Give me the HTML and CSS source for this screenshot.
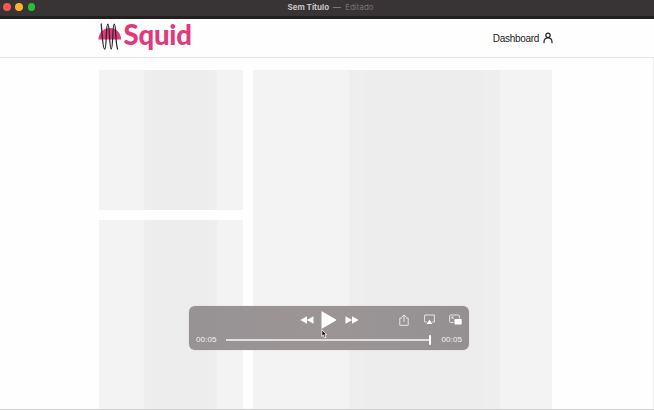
FILE: index.html
```html
<!DOCTYPE html>
<html lang="pt">
<head>
<meta charset="utf-8">
<title>Sem Título</title>
<link rel="stylesheet" href="styles.css">
</head>
<body>
<div class="window">
  <header class="titlebar">
    <div class="lights"><i class="light close"></i><i class="light minimize"></i><i class="light expand"></i></div>
    <div class="title"><b>Sem Título</b><span class="dash">—</span><span>Editado</span></div>
  </header>
  <nav class="nav">
    <div class="brand">
      <svg class="mark" viewBox="0 0 24 28" width="24" height="28">
        <path d="M.3 16.500C1.300 9 5.500 5 11.800 5s10.500 4 11.500 11.500z" fill="#e13a7c"/>
        <path d="M3.200 1C4 7 4.500 26 6.700 26S7.700 1 9.800 1s1.400 25 3.400 25S14.300 1 16.300 1s.9 20 3.300 25" fill="none" stroke="#292329" stroke-width="1.250" stroke-linecap="round"/>
      </svg>
      <span class="wordmark">Squid</span>
    </div>
    <div class="account">
      <span>Dashboard</span>
      <svg width="10" height="12" viewBox="0 0 10 12" fill="none" stroke="#222" stroke-width="1.200" stroke-linecap="round"><circle cx="5" cy="3.300" r="2.200"/><path d="M1 10.700V10c0-2.600 1.500-4.200 4-4.200S9 7.400 9 10v.7"/></svg>
    </div>
  </nav>
  <main class="content">
    <div class="side"><div class="skeleton small"></div><div class="skeleton small lower"></div></div>
    <div class="skeleton large"></div>
  </main>
  <section class="player">
    <div class="controls">
      <div class="transport">
        <svg width="14" height="8" viewBox="0 0 14 8" fill="#fff"><path d="M7 .3v7.400L.3 4zM13.500.3v7.400L6.800 4z"/></svg>
        <svg width="16" height="18" viewBox="0 0 16 18" fill="#fff"><path d="M.5.8Q.5 0 1.300.4L15 8.400q.8.600 0 1.200L1.300 17.600q-.8.400-.8-.4z"/></svg>
        <svg width="14" height="8" viewBox="0 0 14 8" fill="#fff"><path d="M.5.3v7.400L7.200 4zM7 .3v7.400L13.700 4z"/></svg>
      </div>
      <div class="actions">
        <svg width="10" height="12" viewBox="0 0 10 12" fill="none" stroke="#eee" stroke-width=".9"><path d="M3.200 4H.8v7.300h8.400V4H6.800M5 8V1M2.900 3 5 .9 7.100 3"/></svg>
        <svg width="11" height="11" viewBox="0 0 11 11"><path d="M2.600 7.900H.6V1h9.800v6.900h-2" fill="none" stroke="#eee" stroke-width=".9"/><path d="m5.500 5.700 3 4.300h-6z" fill="#fff"/></svg>
        <svg width="13" height="11" viewBox="0 0 13 11"><path d="M4.500 8.500H1.600a1 1 0 0 1-1-1V2a1 1 0 0 1 1-1h7.800a1 1 0 0 1 1 1v2.500" fill="none" stroke="#eee" stroke-width=".9"/><path d="M2.800 3h1.700M2.800 3v1.700M2.800 3l2 2" fill="none" stroke="#eee" stroke-width=".9"/><rect x="5.500" y="5" width="7.200" height="5.500" rx=".7" fill="#fff"/></svg>
      </div>
    </div>
    <div class="timeline"><span>00:05</span><div class="track"><i class="thumb"></i></div><span>00:05</span></div>
  </section>
  <svg class="cursor" width="7" height="10" viewBox="0 0 7 10"><path d="M.8.8v6.500l1.600-1.200 1.100 2.800 1.500-.6-1.200-2.600 2-.1z" fill="#1d191b" stroke="#f4f0f1" stroke-width=".9"/></svg>
</div>
</body>
</html>
```
FILE: styles.css
```css
* { box-sizing: border-box; }
body { margin: 0; background: #fefefe; font-family: "Liberation Sans", sans-serif; }
svg { display: block; flex: none; }
.window {
  position: relative;
  display: flex;
  flex-direction: column;
  height: 410px;
  overflow: hidden;
  border-bottom: 1px solid #cfcfcf;
}
.titlebar {
  display: grid;
  grid-template-columns: 1fr auto 1fr;
  flex: none;
  height: 19px;
  padding-bottom: 4px;
  align-items: center;
  background: #383334;
  border-bottom: 3px solid #211f20;
}
.lights { display: flex; gap: 4.500px; padding: 1px 0 0 3px; }
.light { width: 7.800px; height: 7.800px; border-radius: 50%; }
.close { background: #fc5650; }
.minimize { background: #fdb32a; }
.expand { background: #25c137; }
.title {
  display: flex;
  gap: 4px;
  padding-top: 1px;
  margin-left: 7px;
  font: 8px/12px Inter, sans-serif;
  letter-spacing: 0;
  color: #777174;
}
.title b { color: #c6c2c4; font-weight: 700; }
.dash { color: #948f91; }
.nav {
  display: flex;
  flex: none;
  justify-content: space-between;
  height: 39px;
  padding: 0 101px 0 98px;
  border-bottom: 1px solid #e5e5e5;
}
.brand { display: flex; height: 36px; padding-top: 4px; }
.wordmark {
  margin: -5px 0 0 1.500px;
  font: 900 27.500px/34px Lato, sans-serif;
  letter-spacing: -.2px;
  color: #e13a7c;
}
.account { display: flex; gap: 4px; align-items: center; height: 38px; font-size: 10px; letter-spacing: -.3px; color: #222; }
.content {
  display: flex;
  gap: 10px;
  flex: 1;
  min-height: 0;
  padding: 12px 101px 0 99px;
  border-right: 1px solid #ececec;
}
.side { display: flex; flex-direction: column; gap: 10px; width: 144px; }
.skeleton { background: linear-gradient(90deg, #f3f3f3 0 31%, #eee 31% 36%, #ededed 36% 76%, #eee 76% 82%, #f3f3f3 82%); }
.small { flex: none; height: 140px; }
.lower { flex: 1; height: auto; }
.large { flex: 1; background: linear-gradient(90deg, #f3f3f3 0 32%, #efeeee 32% 37%, #ededed 37% 77%, #efeeee 77% 82.500%, #f3f3f3 82.500%); }
.player {
  position: absolute;
  left: 189px;
  top: 306px;
  width: 280px;
  height: 44px;
  border-radius: 6px;
  background: linear-gradient(90deg, #979293, #9b9596 50%, #949091);
  box-shadow: 0 0 1px #aaa5a6;
}
.controls { display: flex; justify-content: space-between; align-items: center; height: 27px; padding: 0 7px 0 110.500px; }
.transport { display: flex; align-items: center; gap: 7.500px; }
.actions { display: flex; align-items: center; gap: 14.500px; }
.timeline {
  display: flex;
  align-items: center;
  justify-content: space-between;
  height: 14px;
  padding: 0 7px;
  color: #f1f1f1;
  font: 8px/14px "Liberation Sans", sans-serif;
  letter-spacing: .1px;
}
.track { display: flex; align-items: center; justify-content: flex-end; width: 205px; height: 2px; margin-left: -1px; background: #e1dddf; }
.thumb { flex: none; width: 2px; height: 10px; border-radius: 1px; background: #fff; }
.cursor { position: absolute; left: 321px; top: 329px; }
```
